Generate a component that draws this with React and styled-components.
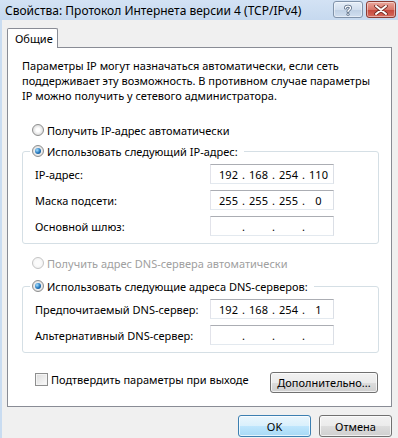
import React from "react"
import styled, { createGlobalStyle } from "styled-components"

const GlobalStyle = createGlobalStyle`
  html, body {
    margin: 0;
    padding: 0;
    background: #f0f0f0;
  }
  body {
    font-family: "Noto Sans", "Open Sans", sans-serif;
    font-size: 11px;
    color: #000;
  }
`

const Window = styled.div`
  width: 398px;
  height: 438px;
  display: flex;
  flex-direction: column;
  overflow: hidden;
  background: #c9dcf1;
`

const TitleBar = styled.div`
  height: 20px;
  flex: none;
  display: flex;
  align-items: center;
  padding: 0 2px 0 5px;
  background: linear-gradient(#d3e2f4, #c6d9ef);
`

const Title = styled.div`
  flex: 1;
  font-size: 12px;
  white-space: nowrap;
`

const CaptionButton = styled.div`
  width: 30px;
  height: 17px;
  margin-left: 3px;
  margin-top: -1px;
  box-sizing: border-box;
  border-radius: 3px;
  display: flex;
  align-items: center;
  justify-content: center;
  border: 1px solid ${(p) => (p.$close ? "#8b3b33" : "#8193aa")};
  background: ${(p) =>
    p.$close
      ? "linear-gradient(#eaa89d, #d9776a 50%, #c5463a 51%, #d56a5c)"
      : "linear-gradient(#e6eef8, #d3dfee 50%, #bfd0e4 51%, #d0deef)"};
  box-shadow: inset 0 0 0 1px rgba(255, 255, 255, 0.45);
`

const Client = styled.div`
  flex: 1;
  display: flex;
  flex-direction: column;
  background: #f0f0f0;
  border-left: 2px solid #c9dcf1;
  padding: 8px 6px 0 5px;
`

const TabStrip = styled.div`
  display: flex;
  height: 20px;
  margin-bottom: -1px;
  position: relative;
  z-index: 1;
`

const Tab = styled.div`
  width: 51px;
  height: 20px;
  box-sizing: border-box;
  border: 1px solid #898c95;
  border-bottom: none;
  border-radius: 2px 2px 0 0;
  background: #fff;
  padding-left: 7px;
  line-height: 19px;
`

const Panel = styled.div`
  height: 360px;
  box-sizing: border-box;
  border: 1px solid #898c95;
  background: #fff;
  display: flex;
  flex-direction: column;
  padding: 10px 12px 13px 14px;
`

const Intro = styled.p`
  margin: 0;
  line-height: 15px;
`

const OptionRow = styled.div`
  display: flex;
  align-items: center;
  height: 16px;
  margin-top: ${(p) => p.$top}px;
  padding-left: 10px;
  color: ${(p) => (p.$disabled ? "#a0a0a0" : "#000")};
`

const RadioMark = styled.span`
  position: relative;
  flex: none;
  width: 12px;
  height: 12px;
  box-sizing: border-box;
  border-radius: 50%;
  margin-right: 3px;
  border: 1px solid ${(p) => (p.$disabled ? "#c4c4c4" : "#8e8f8f")};
  background: ${(p) =>
    p.$disabled
      ? "radial-gradient(circle, #fbfbfb 35%, #ececec 100%)"
      : "radial-gradient(circle, #ffffff 25%, #e2e2e2 65%, #c9c9c9 100%)"};
  &::after {
    content: "";
    display: ${(p) => (p.$checked ? "block" : "none")};
    position: absolute;
    left: 2px;
    top: 2px;
    width: 6px;
    height: 6px;
    border-radius: 50%;
    background: radial-gradient(circle at 35% 35%, #a6e0ff, #2275bb 55%, #0e3d70);
  }
`

const Group = styled.fieldset`
  margin: ${(p) => p.$top}px 0 0;
  padding: 5px 44px 7px 7px;
  min-width: 0;
  border: 1px solid #d5dfe5;
  border-radius: 3px;
  display: flex;
  flex-direction: column;
  gap: 6px;
`

const Legend = styled.legend`
  display: flex;
  align-items: center;
  height: 16px;
  padding: 0 6px 0 2px;
`

const FieldRow = styled.div`
  display: flex;
  align-items: center;
  justify-content: space-between;
  padding-left: 5px;
`

const IpField = styled.div`
  width: 124px;
  height: 20px;
  box-sizing: border-box;
  display: flex;
  align-items: center;
  padding-left: 5px;
  background: #fff;
  border: 1px solid #e3e9ef;
  border-top-color: #abadb3;
  border-left-color: #e2e3ea;
  border-right-color: #dbdfe6;
`

const Octet = styled.span`
  width: 25px;
  text-align: center;
`

const Dot = styled.span`
  width: 5px;
  text-align: center;
`

const BottomRow = styled.div`
  margin-top: auto;
  display: flex;
  align-items: center;
  justify-content: space-between;
  padding-left: 13px;
  padding-right: 1px;
`

const CheckLabel = styled.label`
  display: flex;
  align-items: center;
  margin-top: -6px;
`

const CheckMark = styled.span`
  width: 13px;
  height: 13px;
  box-sizing: border-box;
  margin-right: 3px;
  border: 1px solid #8e8f8f;
  background: linear-gradient(135deg, #dcdcdc, #fbfbfb);
  box-shadow: inset 0 0 0 1px #f4f4f4;
`

const Button = styled.button`
  width: ${(p) => p.$w}px;
  height: ${(p) => p.$h || 22}px;
  padding: 0;
  font: inherit;
  color: #000;
  border-radius: 3px;
  border: 1px solid ${(p) => (p.$default ? "#3c7fb1" : "#707070")};
  background: ${(p) =>
    p.$default
      ? "linear-gradient(#eaf6fd, #d9f0fc 50%, #bee6fd 51%, #a7d9f5)"
      : "linear-gradient(#f2f2f2, #ebebeb 50%, #dddddd 51%, #cfcfcf)"};
  box-shadow: inset 0 0 0 1px rgba(255, 255, 255, 0.7);
`

const Footer = styled.div`
  display: flex;
  justify-content: flex-end;
  gap: 8px;
  margin-top: 8px;
`

const Radio = ({ checked, disabled }) => (
  <RadioMark $checked={checked} $disabled={disabled} />
)

const Ip = ({ value }) => {
  const parts = value ? value.split(".") : ["", "", "", ""]
  return (
    <IpField>
      {parts.map((part, i) => (
        <React.Fragment key={i}>
          {i > 0 && <Dot>.</Dot>}
          <Octet>{part}</Octet>
        </React.Fragment>
      ))}
    </IpField>
  )
}

const HelpIcon = () => (
  <svg width="12" height="12" viewBox="0 0 12 12">
    <path
      d="M3.5 4 C3.5 1.5 8.5 1.5 8.5 4 C8.5 5.8 6 5.8 6 7.5"
      fill="none"
      stroke="#5a6c84"
      strokeWidth="3"
      strokeLinecap="round"
    />
    <path
      d="M3.5 4 C3.5 1.5 8.5 1.5 8.5 4 C8.5 5.8 6 5.8 6 7.5"
      fill="none"
      stroke="#fff"
      strokeWidth="1.4"
      strokeLinecap="round"
    />
    <circle cx="6" cy="10.2" r="1.5" fill="#5a6c84" />
    <circle cx="6" cy="10.2" r="0.8" fill="#fff" />
  </svg>
)

const CloseIcon = () => (
  <svg width="14" height="10" viewBox="0 0 14 10">
    <path d="M2 1 L12 9 M12 1 L2 9" stroke="#6e2a22" strokeWidth="3.6" strokeLinecap="round" />
    <path d="M2 1 L12 9 M12 1 L2 9" stroke="#fff" strokeWidth="2" strokeLinecap="round" />
  </svg>
)

export default function App() {
  return (
    <Window>
      <GlobalStyle />
      <TitleBar>
        <Title>Свойства: Протокол Интернета версии 4 (TCP/IPv4)</Title>
        <CaptionButton>
          <HelpIcon />
        </CaptionButton>
        <CaptionButton $close>
          <CloseIcon />
        </CaptionButton>
      </TitleBar>
      <Client>
        <TabStrip>
          <Tab>Общие</Tab>
        </TabStrip>
        <Panel>
          <Intro>
            Параметры IP могут назначаться автоматически, если сеть
            <br />
            поддерживает эту возможность. В противном случае параметры
            <br />
            IP можно получить у сетевого администратора.
          </Intro>

          <OptionRow $top={19}>
            <Radio />
            Получить IP-адрес автоматически
          </OptionRow>
          <Group $top={5}>
            <Legend>
              <Radio checked />
              Использовать следующий IP-адрес:
            </Legend>
            <FieldRow>
              IP-адрес:
              <Ip value="192.168.254.110" />
            </FieldRow>
            <FieldRow>
              Маска подсети:
              <Ip value="255.255.255.0" />
            </FieldRow>
            <FieldRow>
              Основной шлюз:
              <Ip />
            </FieldRow>
          </Group>

          <OptionRow $top={11} $disabled>
            <Radio disabled />
            Получить адрес DNS-сервера автоматически
          </OptionRow>
          <Group $top={7}>
            <Legend>
              <Radio checked />
              Использовать следующие адреса DNS-серверов:
            </Legend>
            <FieldRow>
              Предпочитаемый DNS-сервер:
              <Ip value="192.168.254.1" />
            </FieldRow>
            <FieldRow>
              Альтернативный DNS-сервер:
              <Ip />
            </FieldRow>
          </Group>

          <BottomRow>
            <CheckLabel>
              <CheckMark />
              Подтвердить параметры при выходе
            </CheckLabel>
            <Button $w={108} $h={21}>
              Дополнительно...
            </Button>
          </BottomRow>
        </Panel>
        <Footer>
          <Button $w={73} $default>
            OK
          </Button>
          <Button $w={73}>Отмена</Button>
        </Footer>
      </Client>
    </Window>
  )
}
